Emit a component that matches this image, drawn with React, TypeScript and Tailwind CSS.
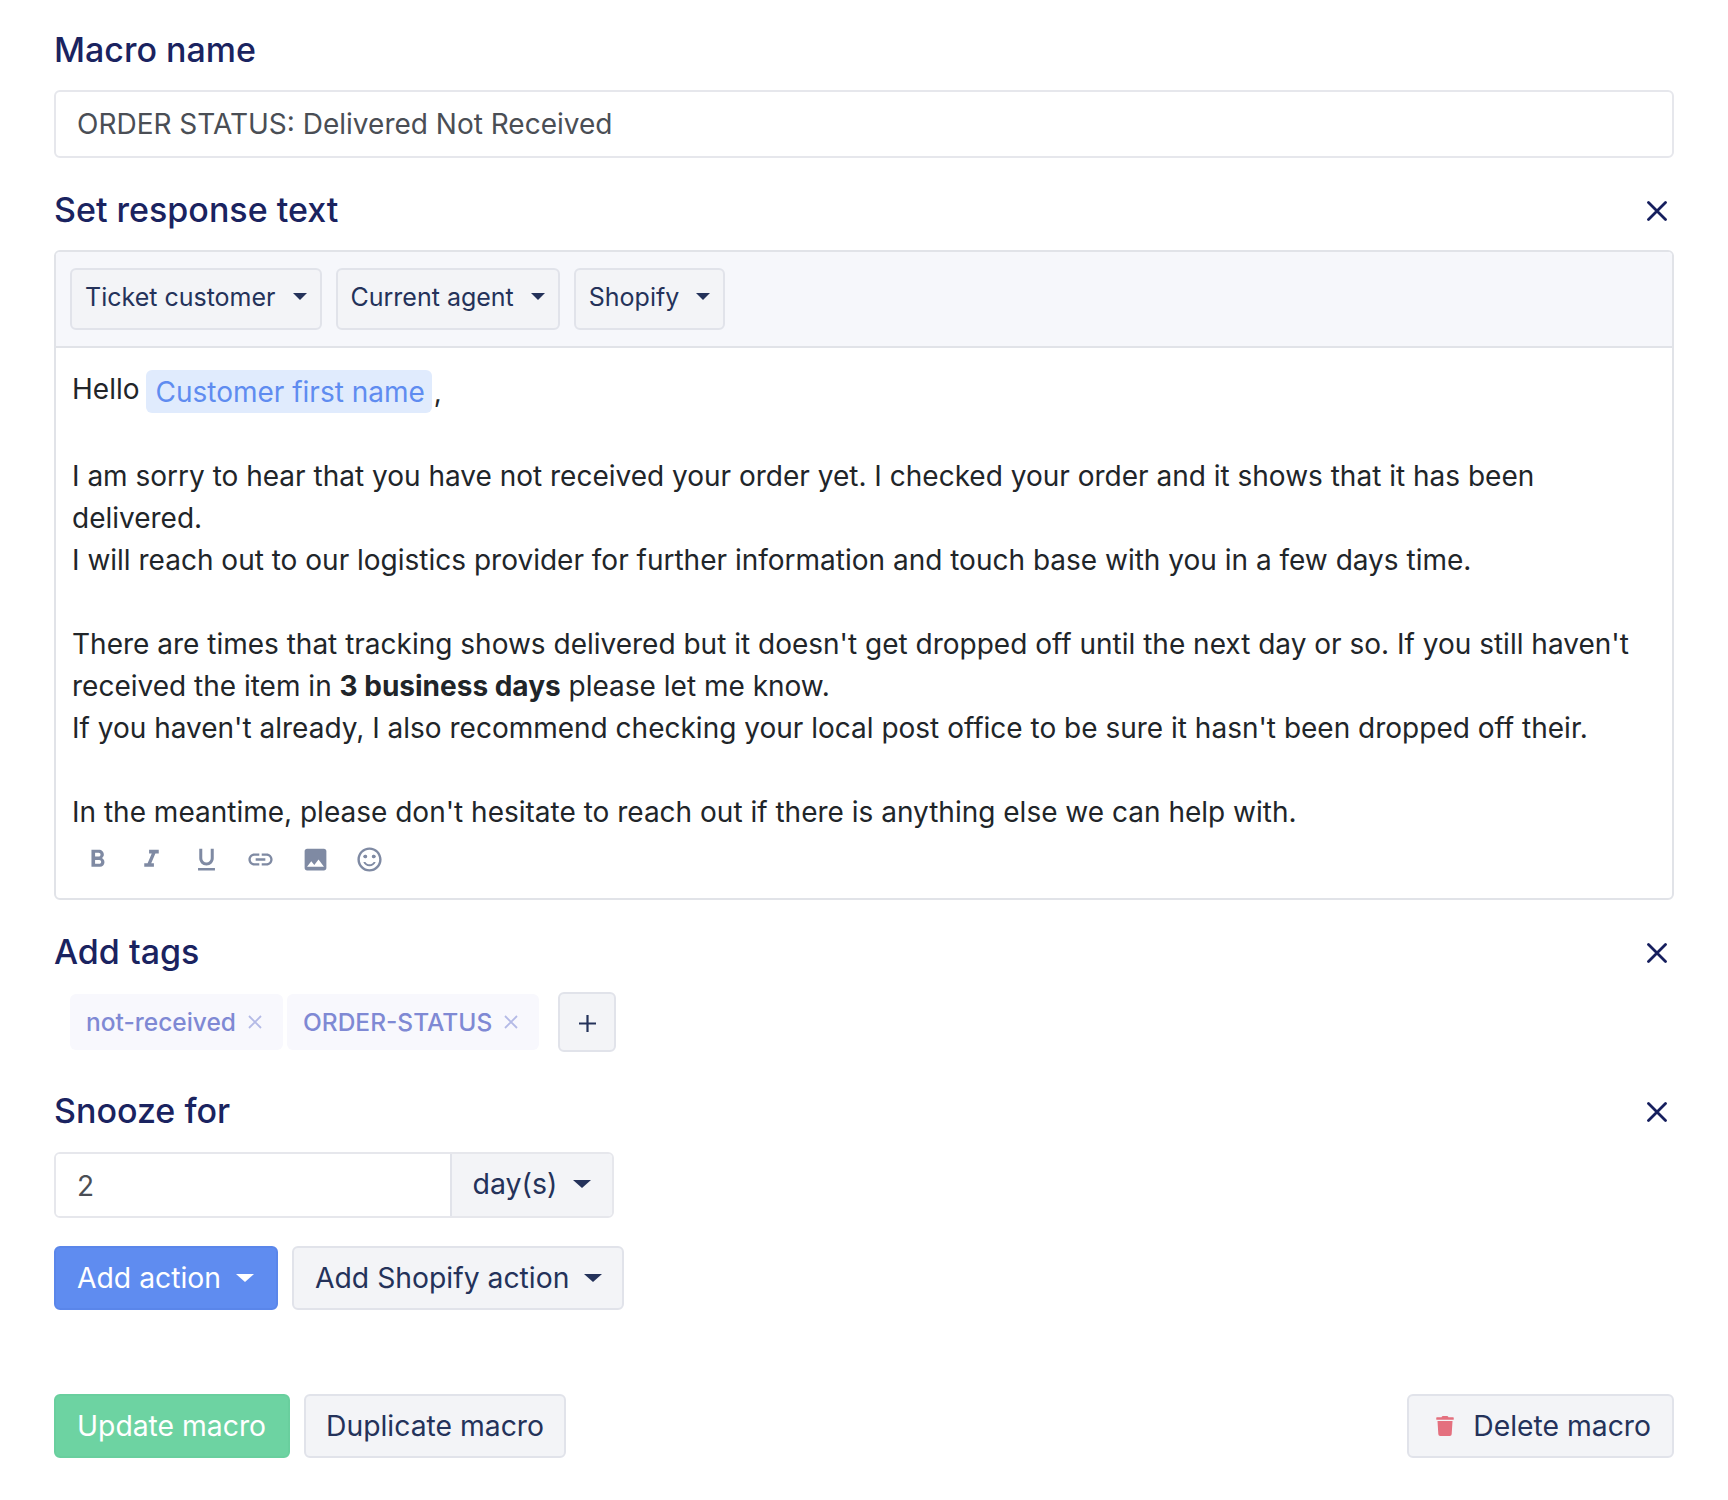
import React from 'react';
import { MdFormatBold, MdFormatItalic, MdFormatUnderlined, MdLink, MdImage, MdSentimentSatisfiedAlt } from 'react-icons/md';
import { FaTrash } from 'react-icons/fa';

const Caret = ({ className = 'border-t-[#24325a]' }: { className?: string }) => (
  <span className={`inline-block w-0 h-0 border-x-[9px] border-x-transparent border-t-[8px] ${className}`}></span>
);

const Close = () => (
  <svg width="20" height="20" viewBox="0 0 20 20" className="text-[#161f5e] translate-y-[1px]">
    <path d="M1.5 1.5L18.5 18.5M18.5 1.5L1.5 18.5" stroke="currentColor" strokeWidth="2.8" strokeLinecap="round" />
  </svg>
);

const Heading = ({ title, closable, className }: { title: string; closable?: boolean; className: string }) => (
  <div className={`flex items-center justify-between h-[44px] pr-[7px] ${className}`}>
    <h2 className="text-[34px] font-medium leading-[44px] text-[#1a2360]">{title}</h2>
    {closable && <Close />}
  </div>
);

const MenuButton = ({ label }: { label: string }) => (
  <button className="h-[62px] px-[13px] pb-[3px] flex items-center gap-[17px] bg-[#f3f4f7] border-2 border-[#e1e3ea] rounded-[6px] text-[25px] text-[#24325a]">
    {label}
    <span className="inline-block w-0 h-0 border-x-[7px] border-x-transparent border-t-[7px] border-t-[#24325a] -translate-y-[1px]"></span>
  </button>
);

const Tag = ({ label }: { label: string }) => (
  <span className="h-[56px] pl-[16px] pr-[21px] flex items-center gap-[12px] bg-[#f8f8fd] rounded-[6px] text-[24.5px] font-medium text-[#7f89d4]">
    {label}
    <svg width="14" height="14" viewBox="0 0 14 14" className="text-[#b4bae6]">
      <path d="M1 1L13 13M13 1L1 13" stroke="currentColor" strokeWidth="1.8" />
    </svg>
  </span>
);

const App: React.FC = () => {
  return (
    <div className="w-[1728px] h-[1500px] bg-white px-[54px] pt-[28px] font-['Inter',sans-serif]">
      <Heading title="Macro name" className="" />
      <div className="mt-[18px] h-[68px] flex items-center px-[21px] border-2 border-[#e6e7ec] rounded-[6px] text-[28px] text-[#4a4e55]">
        ORDER STATUS: Delivered Not Received
      </div>

      <Heading title="Set response text" closable className="mt-[30px]" />
      <div className="mt-[18px] h-[650px] border-2 border-[#e1e3e8] rounded-[6px] overflow-hidden">
        <div className="h-[96px] bg-[#f6f7fb] border-b-2 border-[#e1e3e8] pt-[16px] pl-[14px] flex gap-[14px]">
          <MenuButton label="Ticket customer" />
          <MenuButton label="Current agent" />
          <MenuButton label="Shopify" />
        </div>
        <div className="pl-[16px] pr-[30px] pt-[23px] text-[28px] leading-[42px] text-[#212529]">
          <p className="flex items-center h-[42px]">
            <span className="-translate-y-[3px]">Hello</span>
            <span className="ml-[7px] h-[43px] pt-[2px] pl-[9px] pr-[7px] flex items-center -translate-y-[1px] bg-[#e0ebfd] rounded-[6px] text-[#5f8cf0]">Customer first name</span>
            <span className="ml-[2px]">,</span>
          </p>
          <p className="mt-[42px]">
            I am sorry to hear that you have not received your order yet. I checked your order and it shows that it has been delivered.
          </p>
          <p>I will reach out to our logistics provider for further information and touch base with you in a few days time.</p>
          <p className="mt-[42px]">
            There are times that tracking shows delivered but it doesn't get dropped off until the next day or so. If you still haven't received the item in <b className="font-bold">3 business days</b> please let me know.
          </p>
          <p>If you haven't already, I also recommend checking your local post office to be sure it hasn't been dropped off their.</p>
          <p className="mt-[42px]">In the meantime, please don't hesitate to reach out if there is anything else we can help with.</p>
          <div className="mt-[12px] flex items-center gap-[25.4px] pl-[11px] text-[#7f8aa3]">
            <MdFormatBold size={29} />
            <MdFormatItalic size={29} />
            <MdFormatUnderlined size={29} />
            <MdLink size={29} />
            <MdImage size={29} />
            <MdSentimentSatisfiedAlt size={29} />
          </div>
        </div>
      </div>

      <Heading title="Add tags" closable className="mt-[30px]" />
      <div className="mt-[18px] pl-[16px] flex items-center gap-[4px]">
        <Tag label="not-received" />
        <Tag label="ORDER-STATUS" />
        <button className="ml-[15px] w-[58px] h-[60px] flex items-center justify-center bg-[#f3f4f7] border-2 border-[#e1e3ea] rounded-[6px] text-[#24325a]">
          <svg width="19" height="19" viewBox="0 0 19 19" className="mt-[2px]">
            <path d="M9.5 1V18M1 9.5H18" stroke="currentColor" strokeWidth="2.2" />
          </svg>
        </button>
      </div>

      <Heading title="Snooze for" closable className="mt-[37px]" />
      <div className="mt-[19px] w-[560px] h-[66px] flex border-2 border-[#e6e7ec] rounded-[6px] overflow-hidden">
        <div className="w-[394px] flex items-center pl-[21px] pt-[2px] text-[28px] text-[#4a4e55] bg-white">2</div>
        <div className="flex-1 flex items-center justify-center gap-[16px] pb-[2px] bg-[#f3f4f7] border-l-2 border-[#e1e3ea] text-[28.5px] text-[#24325a]">
          day(s)
          <Caret />
        </div>
      </div>

      <div className="mt-[28px] flex gap-[14px]">
        <button className="h-[64px] pl-[21px] pr-[22px] flex items-center gap-[15px] bg-[#5f8cf0] border-2 border-[#5a86ea] rounded-[6px] text-[28.3px] text-white">
          Add action
          <Caret className="border-t-white" />
        </button>
        <button className="h-[64px] pl-[21px] pr-[20px] flex items-center gap-[15px] bg-[#f3f4f7] border-2 border-[#e1e3ea] rounded-[6px] text-[28.3px] text-[#24325a]">
          Add Shopify action
          <Caret />
        </button>
      </div>

      <div className="mt-[84px] flex items-center gap-[14px]">
        <button className="h-[64px] pl-[21px] pr-[22px] bg-[#6dd3a2] border-2 border-[#69cf9e] rounded-[6px] text-[28.3px] text-white">Update macro</button>
        <button className="h-[64px] px-[20px] bg-[#f3f4f7] border-2 border-[#e1e3ea] rounded-[6px] text-[28.3px] text-[#24325a]">Duplicate macro</button>
        <button className="ml-auto h-[64px] pl-[26px] pr-[21px] flex items-center gap-[18px] bg-[#f3f4f7] border-2 border-[#e1e3ea] rounded-[6px] text-[28.3px] text-[#24325a]">
          <FaTrash size={20} className="text-[#e4707f]" />
          Delete macro
        </button>
      </div>
    </div>
  );
};

export default App;
